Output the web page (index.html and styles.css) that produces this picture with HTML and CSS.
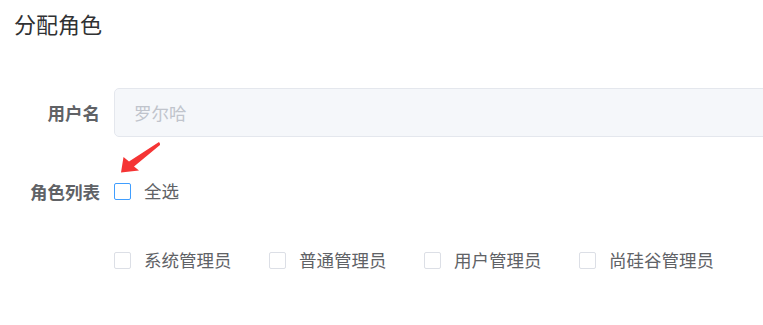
FILE: index.html
```html
<!DOCTYPE html>
<html lang="zh">
<head>
<meta charset="utf-8">
<link rel="stylesheet" href="styles.css">
</head>
<body>
<div class="dialog">
  <div class="dialog-header"><span class="dialog-title">分配角色</span></div>
  <div class="dialog-body">
    <div class="form-item first">
      <label class="form-label">用户名</label>
      <div class="form-content clip">
        <div class="input"><span class="input-text">罗尔哈</span></div>
      </div>
    </div>
    <div class="form-item second">
      <label class="form-label">角色列表</label>
      <div class="form-content">
        <label class="checkbox"><span class="box active"></span><span class="cb-label">全选</span></label>
      </div>
      <svg class="arrow" width="50" height="40" viewBox="0 0 50 40">
        <polygon points="11,33.5 13.5,18 19,22.5 49,3 50.5,5.5 24,27.5 29,31.5" fill="#f53434"/>
      </svg>
    </div>
    <div class="form-item third">
      <div class="form-label"></div>
      <div class="form-content">
        <label class="checkbox"><span class="box"></span><span class="cb-label">系统管理员</span></label>
        <label class="checkbox"><span class="box"></span><span class="cb-label">普通管理员</span></label>
        <label class="checkbox"><span class="box"></span><span class="cb-label">用户管理员</span></label>
        <label class="checkbox"><span class="box"></span><span class="cb-label">尚硅谷管理员</span></label>
      </div>
    </div>
  </div>
</div>
</body>
</html>
```
FILE: styles.css
```css
html, body {
  margin: 0;
  padding: 0;
  background: #ffffff;
  overflow: hidden;
  width: 763px;
  height: 325px;
}
body {
  font-family: "Noto Sans CJK SC", "Noto Sans", sans-serif;
  color: #606266;
}
.dialog {
  width: 763px;
  overflow: hidden;
}
.dialog-header {
  padding: 8px 14px 0 14px;
  height: 30px;
}
.dialog-title {
  font-size: 22px;
  line-height: 30px;
  color: #303133;
}
.dialog-body {
  padding-top: 50px;
}
.form-item {
  display: flex;
  align-items: center;
}
.form-item.first {
  height: 49px;
}
.form-item.second {
  margin-top: 30px;
  height: 48px;
  position: relative;
}
.form-item.third {
  margin-top: 21px;
  height: 48px;
}
.form-label {
  width: 114px;
  box-sizing: border-box;
  padding-right: 14px;
  text-align: right;
  font-size: 17.5px;
  font-weight: bold;
  color: #606266;
  flex-shrink: 0;
}
.form-content {
  display: flex;
  align-items: center;
  flex: 1;
  height: 100%;
  min-width: 0;
}
.form-content.clip {
  overflow: hidden;
}
.input {
  flex: 0 0 auto;
  width: 680px;
  height: 49px;
  box-sizing: border-box;
  border: 1px solid #e4e7ed;
  border-radius: 5px;
  background: #f5f7fa;
  display: flex;
  align-items: center;
  padding-left: 19px;
}
.input-text {
  font-size: 17.5px;
  color: #c0c4cc;
}
.checkbox {
  display: flex;
  align-items: center;
  margin-right: 37.5px;
  cursor: pointer;
  flex-shrink: 0;
}
.box {
  width: 17px;
  height: 17px;
  box-sizing: border-box;
  border: 1px solid #dcdfe6;
  border-radius: 2px;
  background: #fff;
}
.box.active {
  border-color: #409eff;
}
.cb-label {
  font-size: 17.5px;
  color: #606266;
  padding-left: 13px;
  line-height: 20px;
  white-space: nowrap;
}
.arrow {
  position: absolute;
  left: 110px;
  top: -28px;
}
```
